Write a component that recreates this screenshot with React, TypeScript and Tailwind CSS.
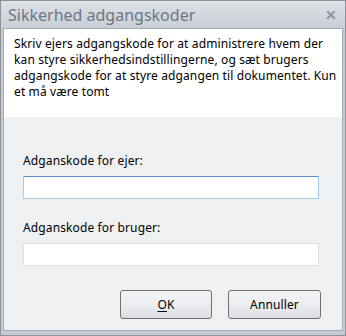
export default function App() {
  return (
    <div className="w-[346px] h-[336px] bg-[#c6ccd3] border border-[#8b9299] flex flex-col font-['Noto_Sans',sans-serif] text-[12px] tracking-[0.12px] text-black">
      <div className="h-[27px] flex items-center justify-between pl-[7px] pr-[8px] bg-gradient-to-b from-[#dee2e7] to-[#c9ced5]">
        <span className="text-[16px] tracking-normal text-[#6c7786] leading-none">Sikkerhed adgangskoder</span>
        <span className="text-[14px] font-bold text-[#8d949c] leading-none">✕</span>
      </div>
      <div className="flex-1 mx-[2px] mb-[4px] border border-[#a4abb3] flex flex-col">
        <div className="bg-white h-[88px] pl-[10px] pt-[7px] leading-[16px] whitespace-nowrap">
          Skriv ejers adgangskode for at administrere hvem der<br />
          kan styre sikkerhedsindstillingerne, og sæt brugers<br />
          adgangskode for at styre adgangen til dokumentet. Kun<br />
          et må være tomt
        </div>
        <div className="flex-1 bg-[#eff0f2] px-[19px] pt-[36px] flex flex-col">
          <label className="leading-[16px]">Adganskode for ejer:</label>
          <div className="mt-[7px] h-[23px] w-[296px] bg-white border border-[#a9c9e6] border-t-[#5b8fc2]" />
          <label className="mt-[21px] leading-[16px]">Adganskode for bruger:</label>
          <div className="mt-[7px] h-[23px] w-[296px] bg-white border border-[#dcdfe3]" />
          <div className="mt-[24px] flex justify-end gap-[16px] pr-[2px]">
            <button className="w-[92px] h-[29px] rounded-[3px] border border-[#707070] bg-gradient-to-b from-[#f2f3f5] via-[#ebedf0] to-[#d9dde2]">
              <span className="underline underline-offset-2">O</span>K
            </button>
            <button className="w-[93px] h-[29px] rounded-[3px] border border-[#707070] bg-gradient-to-b from-[#f2f3f5] via-[#ebedf0] to-[#d9dde2]">
              Annuller
            </button>
          </div>
        </div>
      </div>
    </div>
  );
}
